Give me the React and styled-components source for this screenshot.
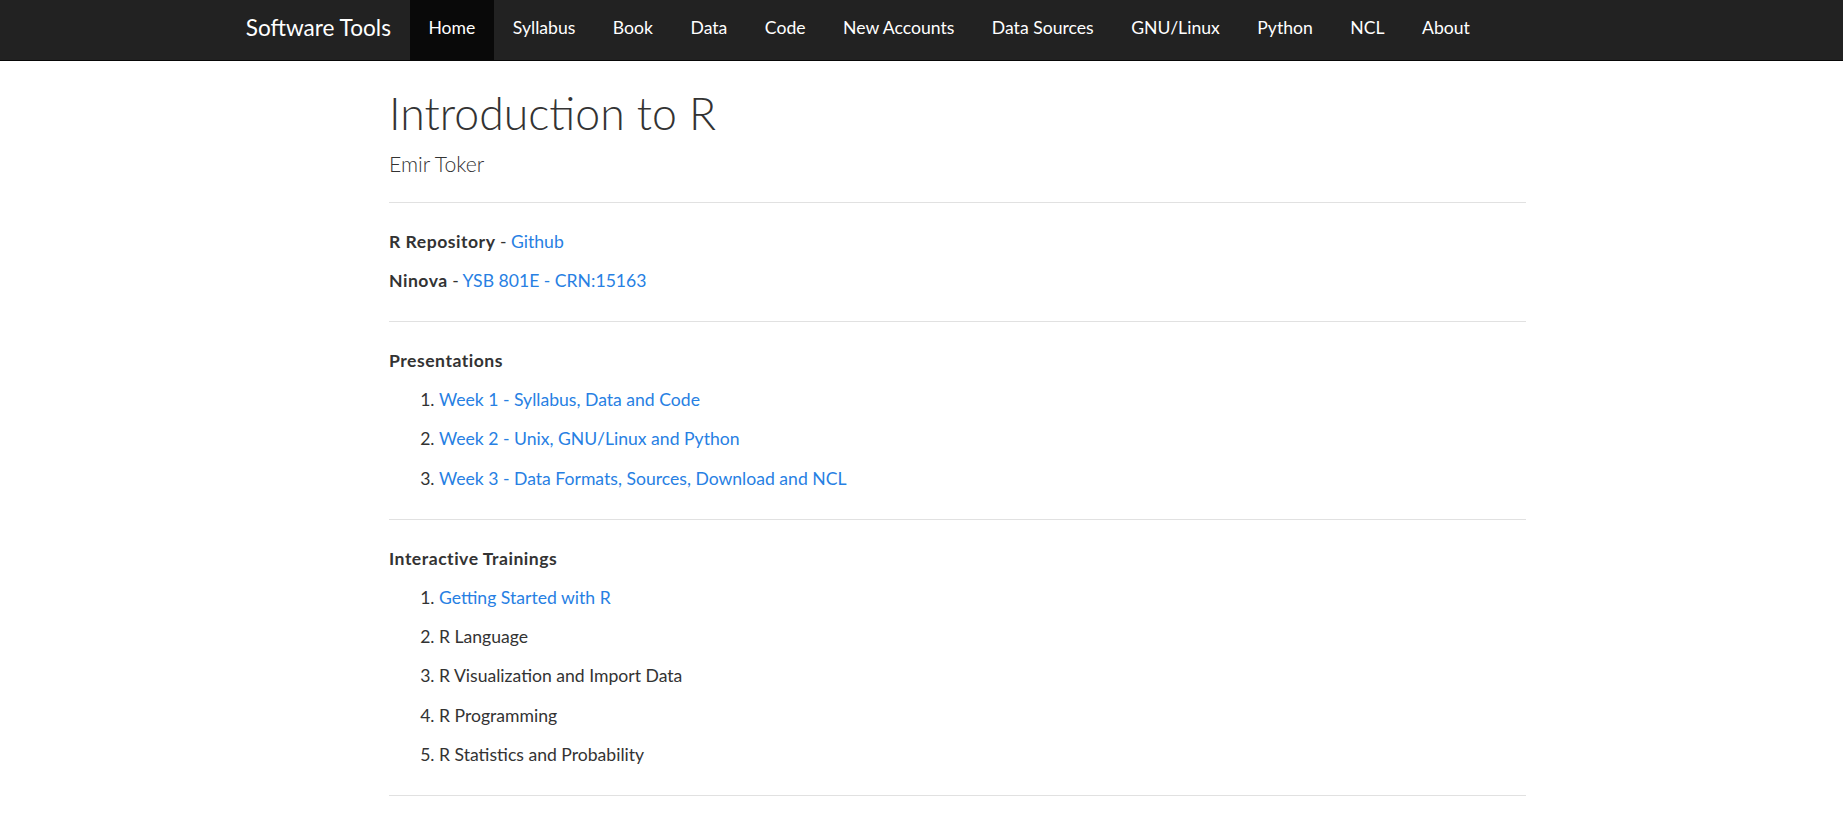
import React from 'react';
import styled, { createGlobalStyle } from 'styled-components';

const GlobalStyle = createGlobalStyle`
  body {
    margin: 0;
    background: #fff;
    color: #333;
    font-family: 'Lato', 'Liberation Sans', sans-serif;
    font-size: 17.6px;
  }
`;

const Navbar = styled.nav`
  background: #222;
  border-bottom: 1px solid #080808;
  height: 60px;
`;

const NavInner = styled.div`
  display: flex;
  align-items: stretch;
  height: 100%;
  padding-left: 227px;
`;

const Brand = styled.a`
  color: #fff;
  font-size: 22.6px;
  line-height: 25px;
  padding: 15px 18.75px 0;
  text-decoration: none;
`;

const NavList = styled.ul`
  display: flex;
  list-style: none;
  margin: 0;
  padding: 0;
`;

const NavLink = styled.a`
  display: block;
  height: 60px;
  box-sizing: border-box;
  padding: 14.7px 18.75px 0;
  line-height: 25px;
  color: #fff;
  text-decoration: none;
  background: ${(p) => (p.$active ? '#090909' : 'transparent')};
`;

const Main = styled.main`
  width: 1137px;
  margin-left: 389px;
`;

const Title = styled.h1`
  font-weight: 300;
  font-size: 44.6px;
  line-height: 49px;
  margin: 27px 0 0;
`;

const Author = styled.h4`
  font-weight: 300;
  font-size: 21.2px;
  line-height: 23.3px;
  margin: 15.5px 0 0;
`;

const Rule = styled.hr`
  border: 0;
  border-top: 1px solid #e1e1e1;
  margin: 26.5px 0 25.5px;
`;

const Para = styled.p`
  margin: 0 0 12.5px;
  line-height: 26.8px;
`;

const Label = styled.strong`
  font-weight: 700;
  letter-spacing: 0.5px;
`;

const Link = styled.a`
  color: #2780e3;
  text-decoration: none;
`;

const List = styled.ol`
  margin: 0 0 12.5px;
  padding-left: 50px;
`;

const navItems = [
  'Home', 'Syllabus', 'Book', 'Data', 'Code', 'New Accounts',
  'Data Sources', 'GNU/Linux', 'Python', 'NCL', 'About',
];

const presentations = [
  'Week 1 - Syllabus, Data and Code',
  'Week 2 - Unix, GNU/Linux and Python',
  'Week 3 - Data Formats, Sources, Download and NCL',
];

const trainings = [
  { text: 'Getting Started with R', link: true },
  { text: 'R Language' },
  { text: 'R Visualization and Import Data' },
  { text: 'R Programming' },
  { text: 'R Statistics and Probability' },
];

export default function App() {
  return (
    <>
      <GlobalStyle />
      <Navbar>
        <NavInner>
          <Brand href="#">Software Tools</Brand>
          <NavList>
            {navItems.map((item, i) => (
              <li key={item}>
                <NavLink href="#" $active={i === 0}>{item}</NavLink>
              </li>
            ))}
          </NavList>
        </NavInner>
      </Navbar>
      <Main>
        <Title>Introduction to R</Title>
        <Author>Emir Toker</Author>
        <Rule />
        <Para><Label>R Repository</Label> - <Link href="#">Github</Link></Para>
        <Para><Label>Ninova</Label> - <Link href="#">YSB 801E - CRN:15163</Link></Para>
        <Rule />
        <Para><Label>Presentations</Label></Para>
        <List>
          {presentations.map((p) => (
            <li key={p}><Para><Link href="#">{p}</Link></Para></li>
          ))}
        </List>
        <Rule />
        <Para><Label>Interactive Trainings</Label></Para>
        <List>
          {trainings.map((t) => (
            <li key={t.text}>
              <Para>{t.link ? <Link href="#">{t.text}</Link> : t.text}</Para>
            </li>
          ))}
        </List>
        <Rule />
      </Main>
    </>
  );
}
